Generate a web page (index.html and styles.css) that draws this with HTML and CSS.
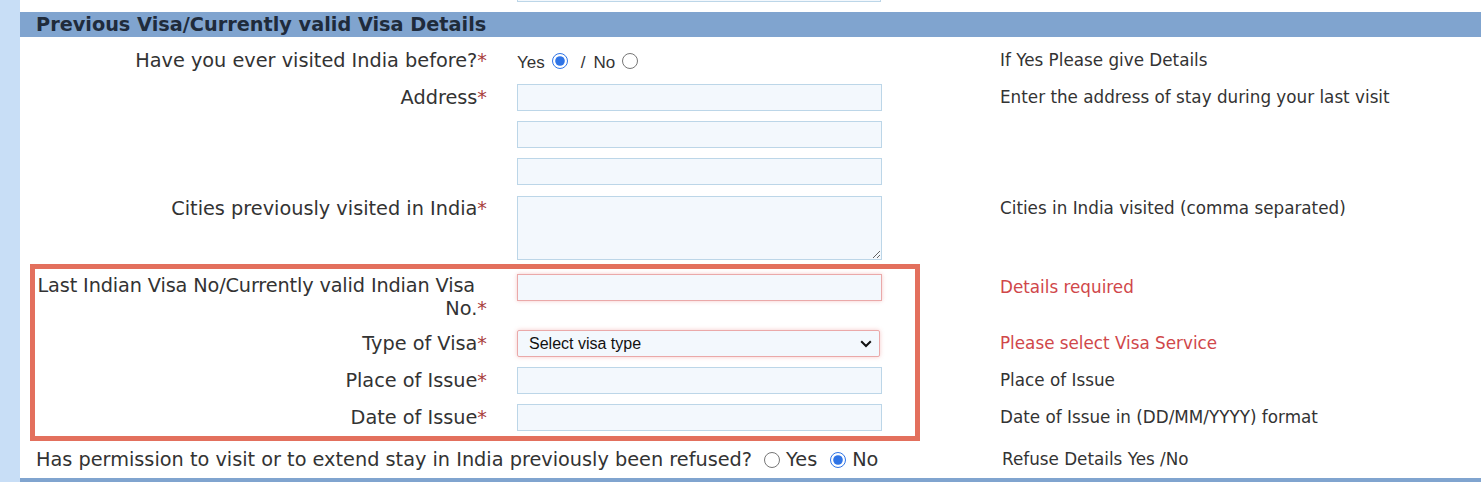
FILE: index.html
```html
<!DOCTYPE html>
<html lang="en">
<head>
<meta charset="utf-8">
<title>Previous Visa Details</title>
<link rel="stylesheet" href="styles.css">
</head>
<body>
<div class="page">
  <div class="strip"></div>
  <main class="main">
    <div class="top-remnant"><div class="remnant-field"></div></div>
    <h2 class="section-head">Previous Visa/Currently valid Visa Details</h2>

    <div class="row row-first">
      <div class="label">Have you ever visited India before?<span class="req">*</span></div>
      <div class="field radios">
        <span class="opt">Yes</span><input type="radio" name="visited" class="radio" checked>
        <span class="sep">/</span><span class="opt">No</span><input type="radio" name="visited" class="radio">
      </div>
      <div class="help">If Yes Please give Details</div>
    </div>

    <div class="row">
      <div class="label">Address<span class="req">*</span></div>
      <div class="field"><input type="text" class="input"></div>
      <div class="help">Enter the address of stay during your last visit</div>
    </div>
    <div class="row">
      <div class="label"></div>
      <div class="field"><input type="text" class="input"></div>
      <div class="help"></div>
    </div>
    <div class="row">
      <div class="label"></div>
      <div class="field"><input type="text" class="input"></div>
      <div class="help"></div>
    </div>
    <div class="row row-area">
      <div class="label">Cities previously visited in India<span class="req">*</span></div>
      <div class="field"><textarea class="textarea"></textarea></div>
      <div class="help">Cities in India visited (comma separated)</div>
    </div>

    <div class="highlight">
      <div class="row row-box row-two">
        <div class="label label-two"><span class="line-one">Last Indian Visa No/Currently valid Indian Visa</span><span class="line-two">No.<span class="req">*</span></span></div>
        <div class="field"><input type="text" class="input input-error"></div>
        <div class="help help-error">Details required</div>
      </div>
      <div class="row row-box">
        <div class="label">Type of Visa<span class="req">*</span></div>
        <div class="field">
          <div class="select-wrap">
            <select class="select input-error"><option>Select visa type</option></select>
            <svg class="chevron" width="12" height="8" viewBox="0 0 12 8"><path d="M1.2 1.2 L6 6 L10.8 1.2" fill="none" stroke="#111" stroke-width="2"/></svg>
          </div>
        </div>
        <div class="help help-error">Please select Visa Service</div>
      </div>
      <div class="row row-box">
        <div class="label">Place of Issue<span class="req">*</span></div>
        <div class="field"><input type="text" class="input"></div>
        <div class="help">Place of Issue</div>
      </div>
      <div class="row row-box">
        <div class="label">Date of Issue<span class="req">*</span></div>
        <div class="field"><input type="text" class="input"></div>
        <div class="help">Date of Issue in (DD/MM/YYYY) format</div>
      </div>
    </div>

    <div class="row row-refused">
      <div class="wide">Has permission to visit or to extend stay in India previously been refused?
        <input type="radio" name="refused" class="radio radio-b"><span class="opt2">Yes</span>
        <input type="radio" name="refused" class="radio radio-b" checked><span class="opt2">No</span>
      </div>
      <div class="help help-shift">Refuse Details Yes /No</div>
    </div>
    <div class="bottom-bar"></div>
  </main>
</div>
</body>
</html>
```

FILE: styles.css
```css
* { box-sizing: border-box; }
html, body { margin: 0; padding: 0; background: #ffffff; }
body { font-family: "DejaVu Sans", Verdana, sans-serif; color: #333333; }

.page { display: flex; min-height: 482px; }
.strip { width: 20px; flex: none; background: #c8def6; }
.main { flex: 1; background: #ffffff; overflow: hidden; }

.top-remnant { height: 12px; padding-left: 497px; }
.remnant-field {
  width: 364px; height: 2px;
  background: #f3f8fd;
  border: 1px solid #bcd6e8; border-top: none;
}

.section-head {
  margin: 0; height: 25px; line-height: 25px;
  background: #80a4cf; color: #1f2b3b;
  font-size: 19.3px; font-weight: bold;
  padding-left: 16px;
}

.row {
  display: grid;
  grid-template-columns: 451px 365px 420px;
  column-gap: 30px;
  padding: 5px 0 5px 16px;
  align-items: start;
}
.row .help { margin-left: 88px; }
.row-first { padding-top: 10px; padding-bottom: 5px; align-items: center; }

.label {
  text-align: right; font-size: 19.3px; line-height: 27px; color: #333333;
  white-space: nowrap;
}
.req { color: #a8403c; }
.help { font-size: 16.8px; line-height: 27px; color: #333333; white-space: nowrap; }
.help-error { color: #d0474a; }

.input {
  display: block; width: 365px; height: 27px; margin: 0;
  background: #f3f8fd; border: 1px solid #bcd6e8; border-radius: 0;
  font-family: "Liberation Sans", Arial, sans-serif; font-size: 16px;
  outline: none;
}
.input-error {
  border-color: #eaa9a9;
  box-shadow: 0 0 4px rgba(225, 100, 100, 0.35);
}
.textarea {
  display: block; width: 365px; height: 64px; margin: 1px 0 0;
  background: #f3f8fd; border: 1px solid #bcd6e8; border-radius: 0;
  resize: both; font-family: "Liberation Sans", Arial, sans-serif;
}
.row-area { padding-top: 5px; padding-bottom: 4px; }

.radios {
  display: flex; align-items: center; height: 27px;
  font-family: "Liberation Sans", Arial, sans-serif; font-size: 17px; color: #333333;
}
.radio {
  width: 16px; height: 16px; margin: 0; accent-color: #2f74e6;
}
.radios .opt { margin-right: 7px; position: relative; top: 2px; }
.radios .sep { margin: 0 8px 0 13px; position: relative; top: 2px; }

.highlight {
  margin-left: 10px; width: 890px;
  border: 5px solid #e3705d;
}
.row-box { grid-template-columns: 452px 365px 420px; padding-left: 0; }
.row-box .help { margin-left: 88px; }
.label-two { line-height: 23px; min-height: 45px; display: flex; flex-direction: column; align-items: flex-end; }
.line-one { padding-right: 12px; letter-spacing: -0.14px; }

.select-wrap { position: relative; width: 363px; height: 27px; }
.select {
  display: block; width: 363px; height: 27px; margin: 0;
  appearance: none; -webkit-appearance: none;
  background: #f3f8fd; border: 1px solid #eaa9a9; border-radius: 2px;
  font-family: "Liberation Sans", Arial, sans-serif; font-size: 16px; color: #111111;
  padding: 0 0 0 11px;
}
.chevron { position: absolute; right: 8px; top: 10px; pointer-events: none; }

.row-refused { grid-template-columns: 846px 420px; column-gap: 0; padding-top: 5px; padding-bottom: 5px; }
.row-refused .help { margin-left: 120px; }
.wide { font-size: 19.3px; line-height: 27px; color: #333333; white-space: nowrap; display: flex; align-items: center; }
.radio-b { margin: 0 6px 0 13px; }
.radio-b:first-of-type { margin-left: 12px; }

.bottom-bar { height: 8px; background: #80a4cf; }
```
